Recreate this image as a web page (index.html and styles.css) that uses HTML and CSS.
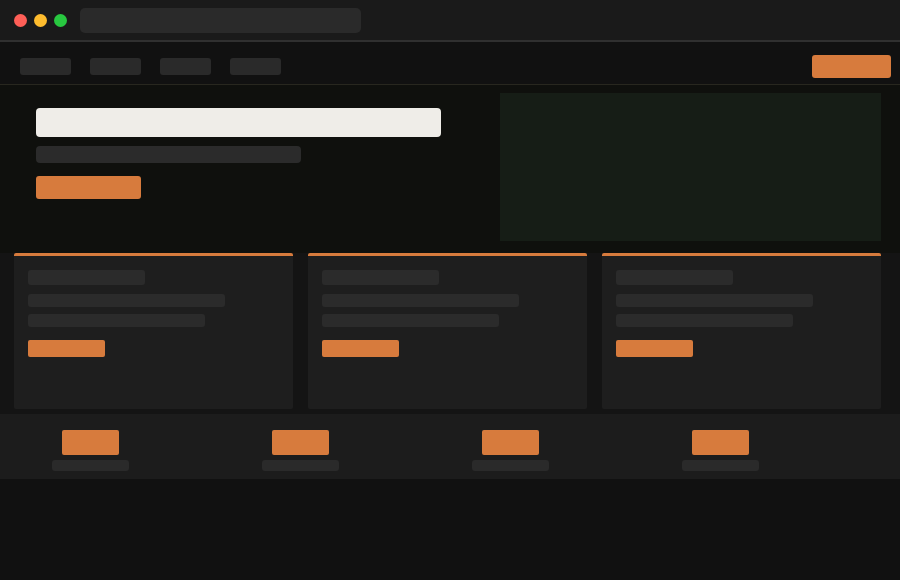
FILE: index.html
```html
<!DOCTYPE html>
<html lang="en">
<head>
<meta charset="utf-8">
<title>Landing</title>
<link rel="stylesheet" href="styles.css">
</head>
<body>
<div class="titlebar">
  <span class="dot red"></span>
  <span class="dot yellow"></span>
  <span class="dot green"></span>
  <div class="address"></div>
</div>
<nav class="nav">
  <div class="nav-links">
    <span class="nav-item"></span>
    <span class="nav-item"></span>
    <span class="nav-item"></span>
    <span class="nav-item"></span>
  </div>
  <span class="nav-cta"></span>
</nav>
<section class="hero">
  <div class="hero-copy">
    <div class="hero-title"></div>
    <div class="hero-sub"></div>
    <div class="hero-btn"></div>
  </div>
  <div class="hero-media"></div>
</section>
<section class="cards">
  <div class="card">
    <div class="card-title"></div>
    <div class="card-line long"></div>
    <div class="card-line short"></div>
    <div class="card-btn"></div>
  </div>
  <div class="card">
    <div class="card-title"></div>
    <div class="card-line long"></div>
    <div class="card-line short"></div>
    <div class="card-btn"></div>
  </div>
  <div class="card">
    <div class="card-title"></div>
    <div class="card-line long"></div>
    <div class="card-line short"></div>
    <div class="card-btn"></div>
  </div>
</section>
<section class="stats">
  <div class="stat"><div class="stat-num"></div><div class="stat-label"></div></div>
  <div class="stat"><div class="stat-num"></div><div class="stat-label"></div></div>
  <div class="stat"><div class="stat-num"></div><div class="stat-label"></div></div>
  <div class="stat"><div class="stat-num"></div><div class="stat-label"></div></div>
</section>
</body>
</html>
```
FILE: styles.css
```css
* { box-sizing: border-box; }
html, body {
  margin: 0;
  padding: 0;
  background: #111111;
  font-family: "Liberation Sans", Arial, sans-serif;
  width: 900px;
  height: 580px;
  overflow: hidden;
}
.titlebar {
  height: 42px;
  background: #1a1a1a;
  border-bottom: 2px solid #303030;
  display: flex;
  align-items: flex-start;
  padding: 0 0 0 14px;
  gap: 7px;
}
.dot {
  width: 13px;
  height: 13px;
  border-radius: 50%;
  margin-top: 14px;
  flex: none;
}
.red { background: #fe5f57; }
.yellow { background: #febc2e; }
.green { background: #28c840; }
.address {
  margin-left: 6px;
  margin-top: 8px;
  width: 281px;
  height: 25px;
  border-radius: 5px;
  background: #2a2a2a;
}
.nav {
  height: 43px;
  background: #111111;
  border-bottom: 1px solid #28271f;
  display: flex;
  justify-content: space-between;
  align-items: flex-start;
  padding: 13px 9px 0 20px;
}
.nav-links {
  display: flex;
  gap: 19px;
  padding-top: 3px;
}
.nav-item {
  width: 51px;
  height: 17px;
  border-radius: 3px;
  background: #2a2a2a;
}
.nav-cta {
  width: 79px;
  height: 23px;
  border-radius: 3px;
  background: #d77b3d;
}
.hero {
  height: 168px;
  background: #0f100d;
  display: flex;
  justify-content: space-between;
  padding: 8px 19px 12px 36px;
}
.hero-copy {
  width: 405px;
  padding-top: 15px;
}
.hero-title {
  height: 29px;
  border-radius: 4px;
  background: #efede8;
}
.hero-sub {
  width: 265px;
  height: 17px;
  margin-top: 9px;
  border-radius: 4px;
  background: #2b2b2b;
}
.hero-btn {
  width: 105px;
  height: 23px;
  margin-top: 13px;
  border-radius: 3px;
  background: #d77b3d;
}
.hero-media {
  width: 381px;
  height: 148px;
  background: #161d16;
}
.cards {
  display: flex;
  gap: 15px;
  padding: 0 19px 5px 14px;
  background: #141414;
}
.card {
  width: 279px;
  height: 156px;
  background: #1e1e1e;
  border-top: 3px solid #d77b3d;
  border-radius: 2px;
  padding: 14px;
}
.card-title {
  width: 117px;
  height: 15px;
  border-radius: 3px;
  background: #2b2b2b;
}
.card-line {
  height: 13px;
  border-radius: 3px;
  background: #2b2b2b;
}
.card-line.long { width: 197px; margin-top: 9px; }
.card-line.short { width: 177px; margin-top: 7px; }
.card-btn {
  width: 77px;
  height: 17px;
  margin-top: 13px;
  border-radius: 2px;
  background: #d77b3d;
}
.stats {
  height: 65px;
  background: #1c1c1c;
  display: flex;
  gap: 70px;
  padding: 16px 0 0 20px;
}
.stat {
  width: 140px;
  display: flex;
  flex-direction: column;
  align-items: center;
}
.stat-num {
  width: 57px;
  height: 25px;
  border-radius: 2px;
  background: #d77b3d;
}
.stat-label {
  width: 77px;
  height: 11px;
  margin-top: 5px;
  border-radius: 3px;
  background: #2a2a2a;
}
```
